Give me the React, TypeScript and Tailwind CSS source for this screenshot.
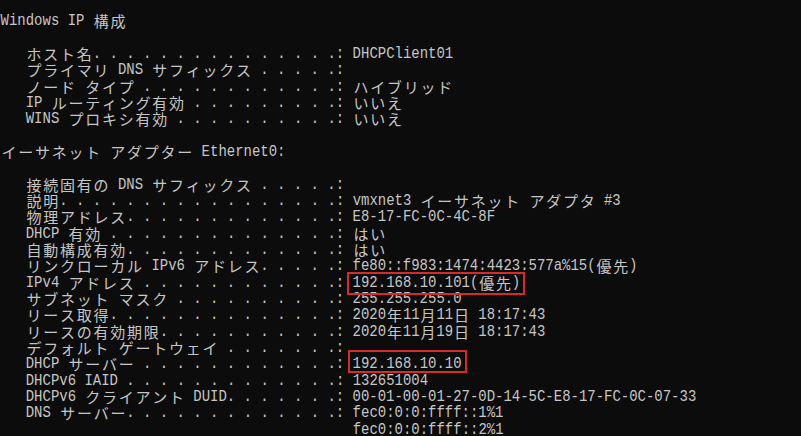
import React from "react";

const isWide = (ch: string) => (ch.codePointAt(0) ?? 0) > 0xff;
const colWidth = (s: string) => {
  let n = 0;
  for (const ch of s) n += isWide(ch) ? 2 : 1;
  return n;
};

function row(label: string, value: string): string {
  let s = "   " + label;
  let col = colWidth(s);
  if (col % 2 === 0) {
    s += " ";
    col++;
  }
  while (col < 40) {
    if (col === 39) {
      s += ".";
      col += 1;
    } else {
      s += ". ";
      col += 2;
    }
  }
  return s + ": " + value;
}

const lines: string[] = [
  "Windows IP 構成",
  "",
  row("ホスト名", "DHCPClient01"),
  row("プライマリ DNS サフィックス", ""),
  row("ノード タイプ", "ハイブリッド"),
  row("IP ルーティング有効", "いいえ"),
  row("WINS プロキシ有効", "いいえ"),
  "",
  "イーサネット アダプター Ethernet0:",
  "",
  row("接続固有の DNS サフィックス", ""),
  row("説明", "vmxnet3 イーサネット アダプタ #3"),
  row("物理アドレス", "E8-17-FC-0C-4C-8F"),
  row("DHCP 有効", "はい"),
  row("自動構成有効", "はい"),
  row("リンクローカル IPv6 アドレス", "fe80::f983:1474:4423:577a%15(優先)"),
  row("IPv4 アドレス", "192.168.10.101(優先)"),
  row("サブネット マスク", "255.255.255.0"),
  row("リース取得", "2020年11月11日 18:17:43"),
  row("リースの有効期限", "2020年11月19日 18:17:43"),
  row("デフォルト ゲートウェイ", ""),
  row("DHCP サーバー", "192.168.10.10"),
  row("DHCPv6 IAID", "132651004"),
  row("DHCPv6 クライアント DUID", "00-01-00-01-27-0D-14-5C-E8-17-FC-0C-07-33"),
  row("DNS サーバー", "fec0:0:0:ffff::1%1"),
  " ".repeat(42) + "fec0:0:0:ffff::2%1",
];

type Run = { wide: boolean; text: string };

function splitRuns(s: string): Run[] {
  const runs: Run[] = [];
  for (const ch of s) {
    const w = isWide(ch);
    const last = runs[runs.length - 1];
    if (last && last.wide === w && !w) last.text += ch;
    else runs.push({ wide: w, text: ch });
  }
  return runs;
}

function Line({ text }: { text: string }) {
  const runs = splitRuns(text);
  return (
    <div className="flex h-[16.33px] items-center whitespace-pre">
      {runs.map((r, i) =>
        r.wide ? (
          <span
            key={i}
            className="inline-block w-[16.764px] shrink-0 text-center font-['Noto_Sans_CJK_JP',sans-serif] text-[15px] leading-[15px]"
          >
            {r.text}
          </span>
        ) : (
          <span
            key={i}
            className="inline-block shrink-0 scale-y-[1.2] font-['Liberation_Mono',monospace] text-[13.97px] leading-[13px]"
          >
            {r.text}
          </span>
        )
      )}
    </div>
  );
}

export default function App() {
  return (
    <div className="relative h-[436px] w-[801px] overflow-hidden bg-[#0c0c0c] text-[#c6c6c6]">
      <div className="flex flex-col pl-[0.6px] pt-[12.8px]">
        {lines.map((l, i) => (
          <Line key={i} text={l} />
        ))}
      </div>
      <div className="absolute left-[347px] top-[272px] h-[23px] w-[178px] border-2 border-[#d42b2b]" />
      <div className="absolute left-[348px] top-[350px] h-[23px] w-[119px] border-2 border-[#d42b2b]" />
    </div>
  );
}
